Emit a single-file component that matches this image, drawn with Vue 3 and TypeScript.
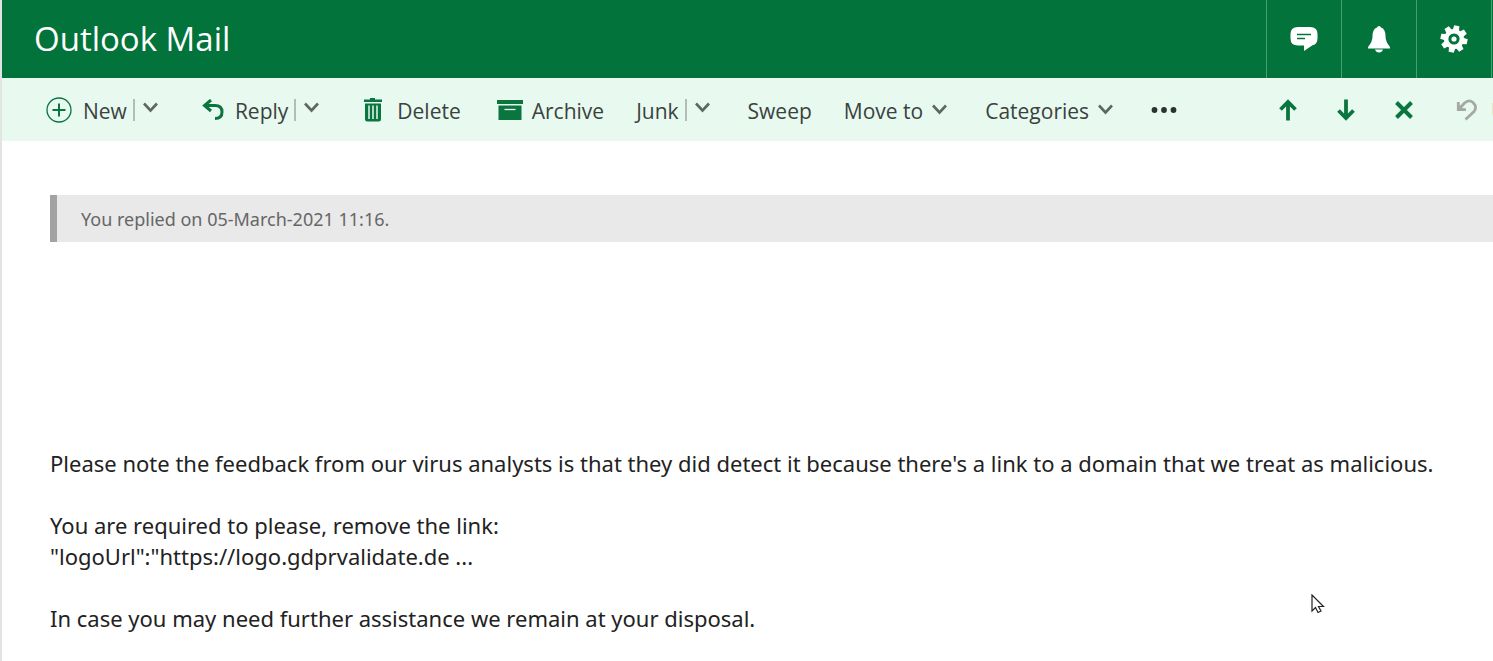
<script setup lang="ts">
interface Command {
  id: string
  label: string
  icon?: 'new' | 'reply' | 'delete' | 'archive'
  menu?: 'split' | 'plain'
}

const commands: Command[] = [
  { id: 'new', label: 'New', icon: 'new', menu: 'split' },
  { id: 'reply', label: 'Reply', icon: 'reply', menu: 'split' },
  { id: 'delete', label: 'Delete', icon: 'delete' },
  { id: 'archive', label: 'Archive', icon: 'archive' },
  { id: 'junk', label: 'Junk', menu: 'split' },
  { id: 'sweep', label: 'Sweep' },
  { id: 'move', label: 'Move to', menu: 'plain' },
  { id: 'categories', label: 'Categories', menu: 'plain' },
]

const teeth: number[] = [0, 45, 90, 135, 180, 225, 270, 315]
</script>

<template>
  <div class="app">
    <header class="header">
      <h1 class="title">Outlook Mail</h1>
      <nav class="tools" aria-label="Account tools">
        <button class="tool" type="button" aria-label="Chat">
          <svg width="28" height="26" viewBox="0 0 28 26">
            <path d="M8 1H20Q27.500 1 27.500 8V12.500Q27.500 18 22.500 19.300L14 25V19.500H8Q0.500 19.500 0.500 12.500V8Q0.500 1 8 1Z" fill="#fff" />
            <path d="M7 8.500H21M7 12.500H15" stroke="#02733a" stroke-width="1.500" />
          </svg>
        </button>
        <button class="tool" type="button" aria-label="Notifications">
          <svg width="24" height="28" viewBox="0 0 24 28">
            <path d="M12 1Q13.500 1 14 2.500Q18.500 4 18.500 11Q18.500 17 23 22V23.500H1V22Q5.500 17 5.500 11Q5.500 4 10 2.500Q10.500 1 12 1Z" fill="#fff" />
            <path d="M8 24.500H16Q15 27.500 12 27.500Q9 27.500 8 24.500Z" fill="#fff" />
          </svg>
        </button>
        <button class="tool" type="button" aria-label="Settings">
          <svg width="28" height="28" viewBox="-14 -14 28 28">
            <g transform="rotate(12)">
              <path v-for="a in teeth" :key="a" d="M-3.300 -8L-2.600 -13.500H2.600L3.300 -8Z" :transform="`rotate(${a})`" fill="#fff" />
              <circle r="7.500" fill="none" stroke="#fff" stroke-width="5" />
            </g>
            <circle r="5.600" fill="#02733a" />
            <circle r="2.600" fill="#fff" />
          </svg>
        </button>
      </nav>
    </header>

    <div class="toolbar" role="toolbar" aria-label="Message actions">
      <div v-for="c in commands" :key="c.id" class="command" :class="c.id">
        <button class="action" type="button">
          <svg v-if="c.icon === 'new'" width="26" height="26" viewBox="0 0 26 26">
            <circle cx="13" cy="13" r="12" fill="none" stroke="#0b7540" stroke-width="1.300" />
            <path d="M13 6.500V19.500M6.500 13H19.500" stroke="#0b7540" stroke-width="2" />
          </svg>
          <svg v-else-if="c.icon === 'reply'" width="22" height="22" viewBox="0 0 22 22">
            <path d="M9 1L2.500 6.500L9 12M2.500 6.500H13Q20 6.500 20 13Q20 19.500 13 19.500" fill="none" stroke="#0b7540" stroke-width="3" />
          </svg>
          <svg v-else-if="c.icon === 'delete'" width="20" height="25" viewBox="0 0 20 25">
            <path d="M1 2.500H7V1H12V2.500H19V5H1ZM2 6.500H18V22Q18 24.500 15.500 24.500H4.500Q2 24.500 2 22Z" fill="#0b7540" />
            <path d="M6 8.500V22M10 8.500V22M14 8.500V22" stroke="#e8f9f0" stroke-width="1.500" />
          </svg>
          <svg v-else-if="c.icon === 'archive'" width="26" height="20" viewBox="0 0 26 20">
            <path d="M0 0H26V4H0ZM1.500 5.500H24.500V20H1.500Z" fill="#0b7540" />
            <path d="M7.500 9.500H18.500" stroke="#e8f9f0" stroke-width="1.300" />
          </svg>
          <span class="label">{{ c.label }}</span>
          <svg v-if="c.menu === 'plain'" width="15" height="11" viewBox="0 0 15 11">
            <path d="M1 1.500L7.500 8.500L14 1.500" fill="none" stroke="#5d6862" stroke-width="2.600" />
          </svg>
        </button>
        <button v-if="c.menu === 'split'" class="split" type="button" :aria-label="`${c.label} options`">
          <svg class="chevron" width="15" height="11" viewBox="0 0 15 11">
            <path d="M1 1.500L7.500 8.500L14 1.500" fill="none" stroke="#5d6862" stroke-width="2.600" />
          </svg>
        </button>
      </div>
      <button class="action more" type="button" aria-label="More commands">
        <svg width="26" height="6" viewBox="0 0 26 6">
          <g fill="#2b3330">
            <circle cx="3.500" cy="3" r="2.900" />
            <circle cx="13" cy="3" r="2.900" />
            <circle cx="22.500" cy="3" r="2.900" />
          </g>
        </svg>
      </button>
      <div class="right">
        <button class="action" type="button" aria-label="Previous message">
          <svg width="18" height="22" viewBox="0 0 18 22">
            <path d="M9 21.500V3M1.500 10.500L9 3L16.500 10.500" fill="none" stroke="#0b7540" stroke-width="3.800" />
          </svg>
        </button>
        <button class="action" type="button" aria-label="Next message">
          <svg width="18" height="22" viewBox="0 0 18 22">
            <path d="M9 0.500V19M1.500 11.500L9 19L16.500 11.500" fill="none" stroke="#0b7540" stroke-width="3.800" />
          </svg>
        </button>
        <button class="action" type="button" aria-label="Close message">
          <svg width="18" height="18" viewBox="0 0 18 18">
            <path d="M1.500 1.500L16.500 16.500M16.500 1.500L1.500 16.500" stroke="#0b7540" stroke-width="4" />
          </svg>
        </button>
        <button class="action undo" type="button">
          <svg width="22" height="22" viewBox="0 0 22 22">
            <path d="M1 3V12H10L6.500 9L4 6.500Z" fill="#a4a9a6" />
            <path d="M2.300 3V10.700H10M3.500 9.500L8.500 4Q13 0 17 3.500Q21.500 8 18 12.500L9.500 20.500" fill="none" stroke="#a4a9a6" stroke-width="2.800" />
          </svg>
          <span class="label">Undo</span>
        </button>
      </div>
    </div>

    <main class="message">
      <p class="notice">You replied on 05-March-2021 11:16.</p>
      <div class="body">
        <p>Please note the feedback from our virus analysts is that they did detect it because there's a link to a domain that we treat as malicious.</p>
        <p>You are required to please, remove the link:<br>"logoUrl":"https://logo.gdprvalidate.de ...</p>
        <p>In case you may need further assistance we remain at your disposal.</p>
      </div>
    </main>

    <svg class="pointer" width="14" height="20" viewBox="0 0 14 20" aria-hidden="true">
      <path d="M1 1V17L4.500 13.500L7 18.500L10 17L7.500 12.500H12.500Z" fill="#fff" stroke="#222" stroke-width="1.200" />
    </svg>
  </div>
</template>

<style>
body {
  margin: 0;
  background: #fff;
}
</style>

<style scoped>
.app {
  position: relative;
  min-height: 100vh;
  box-sizing: border-box;
  overflow: hidden;
  border-left: 2px solid #e2e4e3;
  font-family: "Noto Sans", "Open Sans", sans-serif;
  color: #222;
}
.header {
  display: flex;
  align-items: stretch;
  justify-content: space-between;
  height: 78px;
  margin-left: -2px;
  border-left: 2px solid #3c9263;
  box-sizing: border-box;
  background: #02733a;
}
.title {
  margin: 0;
  padding-left: 32px;
  font-family: "Open Sans", sans-serif;
  font-size: 33px;
  font-weight: 400;
  line-height: 78px;
  color: #fff;
}
.tools {
  display: flex;
  border-right: 1px solid #4b9b6f;
  margin-right: 1px;
}
button {
  display: flex;
  align-items: center;
  margin: 0;
  padding: 0;
  border: 0;
  background: none;
  font: inherit;
  color: inherit;
}
svg {
  flex: none;
  display: block;
}
.tool {
  justify-content: center;
  width: 75px;
  border-left: 1px solid #4b9b6f;
}
.toolbar {
  display: flex;
  align-items: center;
  height: 63px;
  padding-left: 44px;
  background: #e8f9f0;
  font-family: "Open Sans", sans-serif;
  font-size: 21px;
  line-height: 30px;
  color: #3a423e;
  white-space: nowrap;
}
.label {
  padding-top: 2px;
}
.command {
  display: flex;
  align-items: center;
  margin-right: 38px;
}
.action {
  gap: 11px;
}
.new,
.reply {
  margin-right: 44px;
}
.delete .action {
  gap: 14px;
}
.delete {
  margin-right: 36px;
}
.archive,
.sweep {
  margin-right: 32px;
}
.archive .action,
.move .action,
.categories .action {
  gap: 9px;
}
.split {
  height: 22px;
  margin-left: 6px;
  padding-left: 8px;
  border-left: 2px solid #b3bdb8;
}
.chevron {
  margin-bottom: 4px;
}
.right {
  display: flex;
  gap: 40px;
  margin-left: auto;
}
.undo {
  width: 37px;
  margin-left: 3px;
  gap: 13px;
  overflow: hidden;
  color: #a4a9a6;
}
.message {
  padding: 54px 0 24px 48px;
}
.notice {
  margin: 0;
  padding: 1px 0 0 24px;
  border-left: 7px solid #a3a3a3;
  background: #e9e9e9;
  font-size: 18px;
  line-height: 46px;
  color: #666;
}
.body {
  padding-top: 206px;
  font-size: 22px;
  line-height: 31px;
}
.body p {
  margin: 0 0 31px;
}
.pointer {
  position: absolute;
  left: 1309px;
  top: 594px;
}
</style>
